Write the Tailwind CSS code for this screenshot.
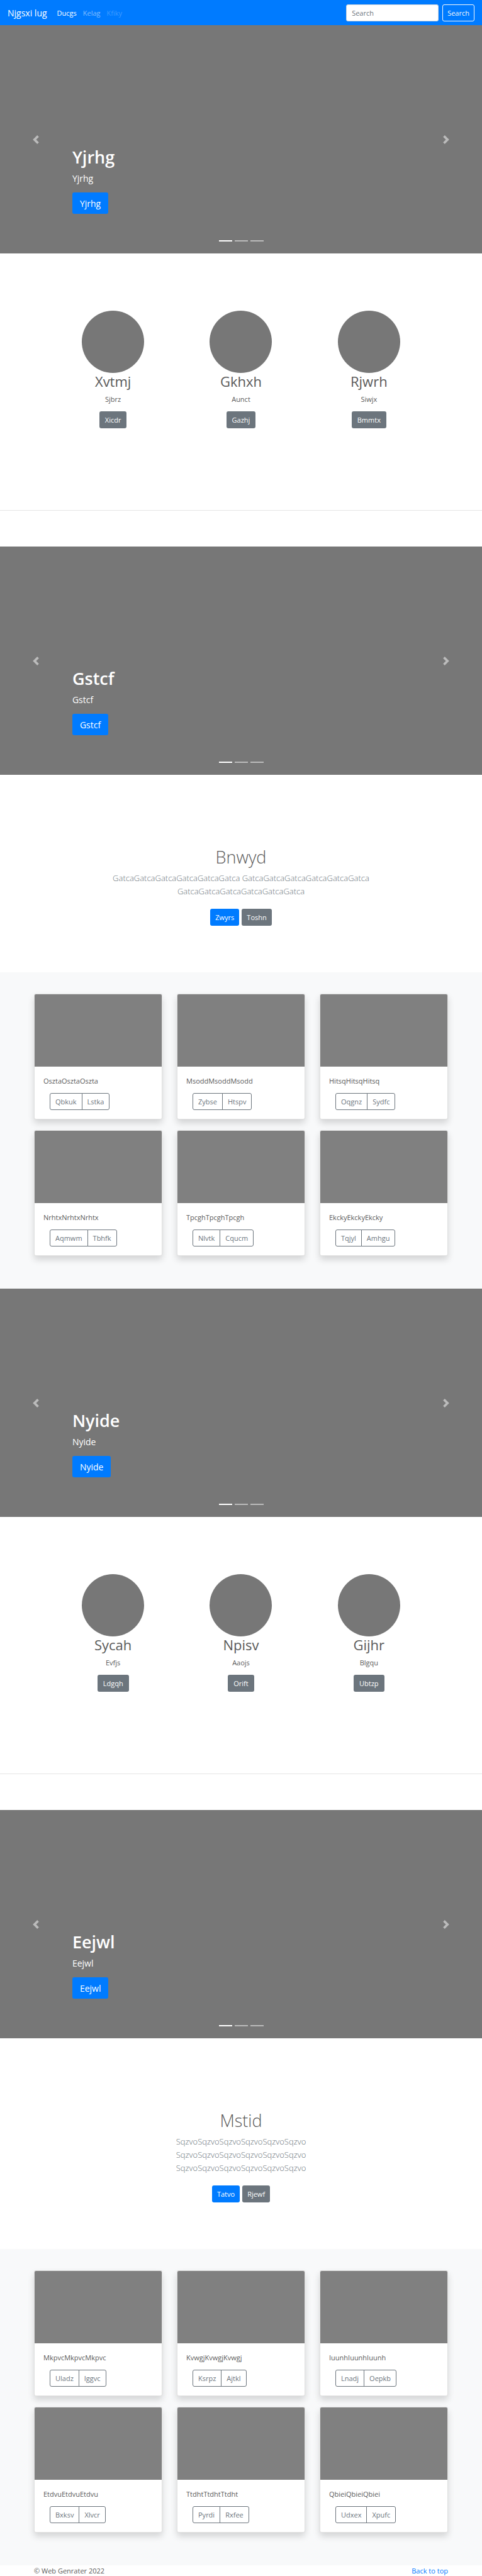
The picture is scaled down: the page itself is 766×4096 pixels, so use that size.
<!DOCTYPE html>
<html lang="en">
<head>
<meta charset="utf-8">
<meta name="viewport" content="width=device-width, initial-scale=1">
<title>Njgsxi lug</title>
<script src="https://cdn.jsdelivr.net/npm/@tailwindcss/browser@4"></script>
</head>
<body class="bg-white font-['Open_Sans','Noto_Sans',sans-serif] text-[11px] leading-[17px] text-[#5a5a5a]">

<header id="top">
  <nav class="flex h-10 items-center bg-[#007bff] px-3 text-white">
    <a href="#" class="mr-4 text-[14px] leading-[21px]">Njgsxi lug</a>
    <ul class="flex flex-1 gap-[10px]">
      <li><a href="#" class="text-white">Ducgs</a></li>
      <li><a href="#" class="text-white/50">Kelag</a></li>
      <li><a href="#" class="text-white/25">Kfiky</a></li>
    </ul>
    <form class="flex gap-[6px]">
      <input type="search" placeholder="Search" aria-label="Search" class="h-[27px] w-[147px] rounded-[3px] border border-[#ced4da] bg-white px-2 text-[#495057] placeholder:text-[#6c757d]">
      <button type="button" class="h-[27px] rounded-[3px] border border-[#f8f9fa] px-[7px] text-[#f8f9fa]">Search</button>
    </form>
  </nav>
</header>

<main>
  <section class="relative h-[363px] bg-[#777]">
    <div class="absolute inset-x-[15%] bottom-[63px] text-white">
      <h1 class="mb-[6px] text-[27px] leading-[34px] font-semibold">Yjrhg</h1>
      <p class="mb-3 text-[14px] leading-[21px]">Yjrhg</p>
      <a href="#" class="inline-flex h-[34px] items-center rounded-[3px] bg-[#007bff] px-3 text-[14px] leading-[21px] align-top">Yjrhg</a>
    </div>
    <button type="button" aria-label="Previous" class="absolute inset-y-0 left-0 flex w-[15%] items-center justify-center text-white/50"><svg class="size-[14px]" viewBox="0 0 8 8" fill="currentColor"><path d="M5.25 0l-4 4 4 4 1.5-1.5L4.25 4l2.5-2.5L5.25 0z"/></svg></button>
    <button type="button" aria-label="Next" class="absolute inset-y-0 right-0 flex w-[15%] items-center justify-center text-white/50"><svg class="size-[14px]" viewBox="0 0 8 8" fill="currentColor"><path d="M2.75 0l-1.5 1.5L3.75 4l-2.5 2.5L2.75 8l4-4-4-4z"/></svg></button>
    <div class="absolute inset-x-0 bottom-[19px] flex justify-center gap-1"><span class="h-[2px] w-[21px] bg-white"></span><span class="h-[2px] w-[21px] bg-white/50"></span><span class="h-[2px] w-[21px] bg-white/50"></span></div>
  </section>

  <section class="grid grid-cols-3 px-[78px] pt-[91px] pb-[130px] text-center">
    <div class="flex flex-col items-center">
      <div class="size-[99px] rounded-full bg-[#777]"></div>
      <h2 class="mb-[6px] text-[22px] leading-[27px]">Xvtmj</h2>
      <p class="mb-[11px]">Sjbrz</p>
      <a href="#" class="flex h-[27px] items-center rounded-[3px] bg-[#6c757d] px-[9px] text-white">Xicdr</a>
    </div>
    <div class="flex flex-col items-center">
      <div class="size-[99px] rounded-full bg-[#777]"></div>
      <h2 class="mb-[6px] text-[22px] leading-[27px]">Gkhxh</h2>
      <p class="mb-[11px]">Aunct</p>
      <a href="#" class="flex h-[27px] items-center rounded-[3px] bg-[#6c757d] px-[9px] text-white">Gazhj</a>
    </div>
    <div class="flex flex-col items-center">
      <div class="size-[99px] rounded-full bg-[#777]"></div>
      <h2 class="mb-[6px] text-[22px] leading-[27px]">Rjwrh</h2>
      <p class="mb-[11px]">Siwjx</p>
      <a href="#" class="flex h-[27px] items-center rounded-[3px] bg-[#6c757d] px-[9px] text-white">Bmmtx</a>
    </div>
  </section>
  <hr class="mb-[57px] border-t border-black/10">

  <section class="relative h-[363px] bg-[#777]">
    <div class="absolute inset-x-[15%] bottom-[63px] text-white">
      <h1 class="mb-[6px] text-[27px] leading-[34px] font-semibold">Gstcf</h1>
      <p class="mb-3 text-[14px] leading-[21px]">Gstcf</p>
      <a href="#" class="inline-flex h-[34px] items-center rounded-[3px] bg-[#007bff] px-3 text-[14px] leading-[21px] align-top">Gstcf</a>
    </div>
    <button type="button" aria-label="Previous" class="absolute inset-y-0 left-0 flex w-[15%] items-center justify-center text-white/50"><svg class="size-[14px]" viewBox="0 0 8 8" fill="currentColor"><path d="M5.25 0l-4 4 4 4 1.5-1.5L4.25 4l2.5-2.5L5.25 0z"/></svg></button>
    <button type="button" aria-label="Next" class="absolute inset-y-0 right-0 flex w-[15%] items-center justify-center text-white/50"><svg class="size-[14px]" viewBox="0 0 8 8" fill="currentColor"><path d="M2.75 0l-1.5 1.5L3.75 4l-2.5 2.5L2.75 8l4-4-4-4z"/></svg></button>
    <div class="absolute inset-x-0 bottom-[19px] flex justify-center gap-1"><span class="h-[2px] w-[21px] bg-white"></span><span class="h-[2px] w-[21px] bg-white/50"></span><span class="h-[2px] w-[21px] bg-white/50"></span></div>
  </section>

  <section class="px-[150px] pt-[114px] pb-[74px] text-center">
    <h1 class="mb-[6px] text-[27px] leading-[34px] font-light">Bnwyd</h1>
    <p class="mb-[17px] text-[13px] leading-[21px] font-light text-[#6c757d]">GatcaGatcaGatcaGatcaGatcaGatca GatcaGatcaGatcaGatcaGatcaGatca GatcaGatcaGatcaGatcaGatcaGatca</p>
    <div class="flex justify-center gap-1">
      <a href="#" class="flex h-[27px] items-center rounded-[3px] bg-[#007bff] px-2 text-white">Zwyrs</a>
      <a href="#" class="flex h-[27px] items-center rounded-[3px] bg-[#6c757d] px-2 text-white">Toshn</a>
    </div>
  </section>

  <section class="grid grid-cols-3 gap-x-[23px] gap-y-[17px] bg-[#f8f9fa] px-[54px] pt-[34px] pb-[52px]">
    <article class="overflow-hidden rounded-[3px] border border-black/12 bg-white shadow-[0_6px_11px_rgba(0,0,0,0.15)]">
      <div class="h-[115px] bg-[#808080]"></div>
      <div class="p-[14px]">
        <p class="mb-[11px]">OsztaOsztaOszta</p>
        <div class="ml-[10px] flex h-[27px] text-[#6c757d]"><button type="button" class="rounded-l-[3px] border border-[#6c757d] px-2">Qbkuk</button><button type="button" class="-ml-px rounded-r-[3px] border border-[#6c757d] px-2">Lstka</button></div>
      </div>
    </article>
    <article class="overflow-hidden rounded-[3px] border border-black/12 bg-white shadow-[0_6px_11px_rgba(0,0,0,0.15)]">
      <div class="h-[115px] bg-[#808080]"></div>
      <div class="p-[14px]">
        <p class="mb-[11px]">MsoddMsoddMsodd</p>
        <div class="ml-[10px] flex h-[27px] text-[#6c757d]"><button type="button" class="rounded-l-[3px] border border-[#6c757d] px-2">Zybse</button><button type="button" class="-ml-px rounded-r-[3px] border border-[#6c757d] px-2">Htspv</button></div>
      </div>
    </article>
    <article class="overflow-hidden rounded-[3px] border border-black/12 bg-white shadow-[0_6px_11px_rgba(0,0,0,0.15)]">
      <div class="h-[115px] bg-[#808080]"></div>
      <div class="p-[14px]">
        <p class="mb-[11px]">HitsqHitsqHitsq</p>
        <div class="ml-[10px] flex h-[27px] text-[#6c757d]"><button type="button" class="rounded-l-[3px] border border-[#6c757d] px-2">Oqgnz</button><button type="button" class="-ml-px rounded-r-[3px] border border-[#6c757d] px-2">Sydfc</button></div>
      </div>
    </article>
    <article class="overflow-hidden rounded-[3px] border border-black/12 bg-white shadow-[0_6px_11px_rgba(0,0,0,0.15)]">
      <div class="h-[115px] bg-[#808080]"></div>
      <div class="p-[14px]">
        <p class="mb-[11px]">NrhtxNrhtxNrhtx</p>
        <div class="ml-[10px] flex h-[27px] text-[#6c757d]"><button type="button" class="rounded-l-[3px] border border-[#6c757d] px-2">Aqmwm</button><button type="button" class="-ml-px rounded-r-[3px] border border-[#6c757d] px-2">Tbhfk</button></div>
      </div>
    </article>
    <article class="overflow-hidden rounded-[3px] border border-black/12 bg-white shadow-[0_6px_11px_rgba(0,0,0,0.15)]">
      <div class="h-[115px] bg-[#808080]"></div>
      <div class="p-[14px]">
        <p class="mb-[11px]">TpcghTpcghTpcgh</p>
        <div class="ml-[10px] flex h-[27px] text-[#6c757d]"><button type="button" class="rounded-l-[3px] border border-[#6c757d] px-2">Nlvtk</button><button type="button" class="-ml-px rounded-r-[3px] border border-[#6c757d] px-2">Cqucm</button></div>
      </div>
    </article>
    <article class="overflow-hidden rounded-[3px] border border-black/12 bg-white shadow-[0_6px_11px_rgba(0,0,0,0.15)]">
      <div class="h-[115px] bg-[#808080]"></div>
      <div class="p-[14px]">
        <p class="mb-[11px]">EkckyEkckyEkcky</p>
        <div class="ml-[10px] flex h-[27px] text-[#6c757d]"><button type="button" class="rounded-l-[3px] border border-[#6c757d] px-2">Tqjyl</button><button type="button" class="-ml-px rounded-r-[3px] border border-[#6c757d] px-2">Amhgu</button></div>
      </div>
    </article>
  </section>

  <section class="relative h-[363px] bg-[#777]">
    <div class="absolute inset-x-[15%] bottom-[63px] text-white">
      <h1 class="mb-[6px] text-[27px] leading-[34px] font-semibold">Nyide</h1>
      <p class="mb-3 text-[14px] leading-[21px]">Nyide</p>
      <a href="#" class="inline-flex h-[34px] items-center rounded-[3px] bg-[#007bff] px-3 text-[14px] leading-[21px] align-top">Nyide</a>
    </div>
    <button type="button" aria-label="Previous" class="absolute inset-y-0 left-0 flex w-[15%] items-center justify-center text-white/50"><svg class="size-[14px]" viewBox="0 0 8 8" fill="currentColor"><path d="M5.25 0l-4 4 4 4 1.5-1.5L4.25 4l2.5-2.5L5.25 0z"/></svg></button>
    <button type="button" aria-label="Next" class="absolute inset-y-0 right-0 flex w-[15%] items-center justify-center text-white/50"><svg class="size-[14px]" viewBox="0 0 8 8" fill="currentColor"><path d="M2.75 0l-1.5 1.5L3.75 4l-2.5 2.5L2.75 8l4-4-4-4z"/></svg></button>
    <div class="absolute inset-x-0 bottom-[19px] flex justify-center gap-1"><span class="h-[2px] w-[21px] bg-white"></span><span class="h-[2px] w-[21px] bg-white/50"></span><span class="h-[2px] w-[21px] bg-white/50"></span></div>
  </section>

  <section class="grid grid-cols-3 px-[78px] pt-[91px] pb-[130px] text-center">
    <div class="flex flex-col items-center">
      <div class="size-[99px] rounded-full bg-[#777]"></div>
      <h2 class="mb-[6px] text-[22px] leading-[27px]">Sycah</h2>
      <p class="mb-[11px]">Evfjs</p>
      <a href="#" class="flex h-[27px] items-center rounded-[3px] bg-[#6c757d] px-[9px] text-white">Ldgqh</a>
    </div>
    <div class="flex flex-col items-center">
      <div class="size-[99px] rounded-full bg-[#777]"></div>
      <h2 class="mb-[6px] text-[22px] leading-[27px]">Npisv</h2>
      <p class="mb-[11px]">Aaojs</p>
      <a href="#" class="flex h-[27px] items-center rounded-[3px] bg-[#6c757d] px-[9px] text-white">Orift</a>
    </div>
    <div class="flex flex-col items-center">
      <div class="size-[99px] rounded-full bg-[#777]"></div>
      <h2 class="mb-[6px] text-[22px] leading-[27px]">Gijhr</h2>
      <p class="mb-[11px]">Blgqu</p>
      <a href="#" class="flex h-[27px] items-center rounded-[3px] bg-[#6c757d] px-[9px] text-white">Ubtzp</a>
    </div>
  </section>
  <hr class="mb-[57px] border-t border-black/10">

  <section class="relative h-[363px] bg-[#777]">
    <div class="absolute inset-x-[15%] bottom-[63px] text-white">
      <h1 class="mb-[6px] text-[27px] leading-[34px] font-semibold">Eejwl</h1>
      <p class="mb-3 text-[14px] leading-[21px]">Eejwl</p>
      <a href="#" class="inline-flex h-[34px] items-center rounded-[3px] bg-[#007bff] px-3 text-[14px] leading-[21px] align-top">Eejwl</a>
    </div>
    <button type="button" aria-label="Previous" class="absolute inset-y-0 left-0 flex w-[15%] items-center justify-center text-white/50"><svg class="size-[14px]" viewBox="0 0 8 8" fill="currentColor"><path d="M5.25 0l-4 4 4 4 1.5-1.5L4.25 4l2.5-2.5L5.25 0z"/></svg></button>
    <button type="button" aria-label="Next" class="absolute inset-y-0 right-0 flex w-[15%] items-center justify-center text-white/50"><svg class="size-[14px]" viewBox="0 0 8 8" fill="currentColor"><path d="M2.75 0l-1.5 1.5L3.75 4l-2.5 2.5L2.75 8l4-4-4-4z"/></svg></button>
    <div class="absolute inset-x-0 bottom-[19px] flex justify-center gap-1"><span class="h-[2px] w-[21px] bg-white"></span><span class="h-[2px] w-[21px] bg-white/50"></span><span class="h-[2px] w-[21px] bg-white/50"></span></div>
  </section>

  <section class="px-[150px] pt-[114px] pb-[74px] text-center">
    <h1 class="mb-[6px] text-[27px] leading-[34px] font-light">Mstid</h1>
    <p class="mb-[17px] text-[13px] leading-[21px] font-light text-[#6c757d]">SqzvoSqzvoSqzvoSqzvoSqzvoSqzvo<br>SqzvoSqzvoSqzvoSqzvoSqzvoSqzvo<br>SqzvoSqzvoSqzvoSqzvoSqzvoSqzvo</p>
    <div class="flex justify-center gap-1">
      <a href="#" class="flex h-[27px] items-center rounded-[3px] bg-[#007bff] px-2 text-white">Tatvo</a>
      <a href="#" class="flex h-[27px] items-center rounded-[3px] bg-[#6c757d] px-2 text-white">Rjewf</a>
    </div>
  </section>

  <section class="grid grid-cols-3 gap-x-[23px] gap-y-[17px] bg-[#f8f9fa] px-[54px] pt-[34px] pb-[52px]">
    <article class="overflow-hidden rounded-[3px] border border-black/12 bg-white shadow-[0_6px_11px_rgba(0,0,0,0.15)]">
      <div class="h-[115px] bg-[#808080]"></div>
      <div class="p-[14px]">
        <p class="mb-[11px]">MkpvcMkpvcMkpvc</p>
        <div class="ml-[10px] flex h-[27px] text-[#6c757d]"><button type="button" class="rounded-l-[3px] border border-[#6c757d] px-2">Uladz</button><button type="button" class="-ml-px rounded-r-[3px] border border-[#6c757d] px-2">Iggvc</button></div>
      </div>
    </article>
    <article class="overflow-hidden rounded-[3px] border border-black/12 bg-white shadow-[0_6px_11px_rgba(0,0,0,0.15)]">
      <div class="h-[115px] bg-[#808080]"></div>
      <div class="p-[14px]">
        <p class="mb-[11px]">KvwgjKvwgjKvwgj</p>
        <div class="ml-[10px] flex h-[27px] text-[#6c757d]"><button type="button" class="rounded-l-[3px] border border-[#6c757d] px-2">Ksrpz</button><button type="button" class="-ml-px rounded-r-[3px] border border-[#6c757d] px-2">Ajtkl</button></div>
      </div>
    </article>
    <article class="overflow-hidden rounded-[3px] border border-black/12 bg-white shadow-[0_6px_11px_rgba(0,0,0,0.15)]">
      <div class="h-[115px] bg-[#808080]"></div>
      <div class="p-[14px]">
        <p class="mb-[11px]">IuunhIuunhIuunh</p>
        <div class="ml-[10px] flex h-[27px] text-[#6c757d]"><button type="button" class="rounded-l-[3px] border border-[#6c757d] px-2">Lnadj</button><button type="button" class="-ml-px rounded-r-[3px] border border-[#6c757d] px-2">Oepkb</button></div>
      </div>
    </article>
    <article class="overflow-hidden rounded-[3px] border border-black/12 bg-white shadow-[0_6px_11px_rgba(0,0,0,0.15)]">
      <div class="h-[115px] bg-[#808080]"></div>
      <div class="p-[14px]">
        <p class="mb-[11px]">EtdvuEtdvuEtdvu</p>
        <div class="ml-[10px] flex h-[27px] text-[#6c757d]"><button type="button" class="rounded-l-[3px] border border-[#6c757d] px-2">Bxksv</button><button type="button" class="-ml-px rounded-r-[3px] border border-[#6c757d] px-2">Xlvcr</button></div>
      </div>
    </article>
    <article class="overflow-hidden rounded-[3px] border border-black/12 bg-white shadow-[0_6px_11px_rgba(0,0,0,0.15)]">
      <div class="h-[115px] bg-[#808080]"></div>
      <div class="p-[14px]">
        <p class="mb-[11px]">TtdhtTtdhtTtdht</p>
        <div class="ml-[10px] flex h-[27px] text-[#6c757d]"><button type="button" class="rounded-l-[3px] border border-[#6c757d] px-2">Pyrdi</button><button type="button" class="-ml-px rounded-r-[3px] border border-[#6c757d] px-2">Rxfee</button></div>
      </div>
    </article>
    <article class="overflow-hidden rounded-[3px] border border-black/12 bg-white shadow-[0_6px_11px_rgba(0,0,0,0.15)]">
      <div class="h-[115px] bg-[#808080]"></div>
      <div class="p-[14px]">
        <p class="mb-[11px]">QbieiQbieiQbiei</p>
        <div class="ml-[10px] flex h-[27px] text-[#6c757d]"><button type="button" class="rounded-l-[3px] border border-[#6c757d] px-2">Udxex</button><button type="button" class="-ml-px rounded-r-[3px] border border-[#6c757d] px-2">Xpufc</button></div>
      </div>
    </article>
  </section>
</main>

<footer class="flex justify-between px-[54px]">
  <p>© Web Genrater 2022</p>
  <a href="#top" class="text-[#007bff]">Back to top</a>
</footer>
</body>
</html>
